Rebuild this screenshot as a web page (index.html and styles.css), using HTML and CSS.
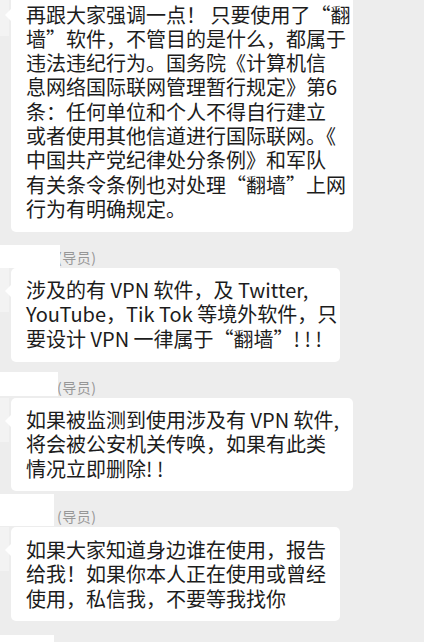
FILE: index.html
```html
<!DOCTYPE html>
<html lang="zh-CN">
<head>
<meta charset="utf-8">
<link rel="stylesheet" href="styles.css">
</head>
<body>
<div class="chat">
  <div class="msg first">
    <div class="body">
      <div class="avatar"></div>
      <div class="bubble wide">再跟大家强调一点！ 只要使用了“翻<br>墙”软件，不管目的是什么，都属于<br>违法违纪行为。国务院《计算机信<br>息网络国际联网管理暂行规定》第6<br>条：任何单位和个人不得自行建立<br>或者使用其他信道进行国际联网。《<br>中国共产党纪律处分条例》和军队<br>有关条令条例也对处理“翻墙”上网<br>行为有明确规定。</div>
    </div>
  </div>

  <div class="msg">
    <div class="name-row">
      <span class="redact r1"></span>
      <span class="name">(导员)</span>
    </div>
    <div class="body">
      <div class="avatar"></div>
      <div class="bubble narrow">涉及的有 VPN 软件，及 Twitter,<br>YouTube，Tik Tok 等境外软件，只<br>要设计 VPN 一律属于“翻墙”! ! !</div>
    </div>
  </div>

  <div class="msg">
    <div class="name-row">
      <span class="redact r2"></span>
      <span class="name">(导员)</span>
    </div>
    <div class="body">
      <div class="avatar"></div>
      <div class="bubble wide">如果被监测到使用涉及有 VPN 软件,<br>将会被公安机关传唤，如果有此类<br>情况立即删除! !</div>
    </div>
  </div>

  <div class="msg">
    <div class="name-row">
      <span class="redact r3"></span>
      <span class="name">(导员)</span>
    </div>
    <div class="body">
      <div class="avatar"></div>
      <div class="bubble narrow">如果大家知道身边谁在使用，报告<br>给我！如果你本人正在使用或曾经<br>使用，私信我，不要等我找你</div>
    </div>
  </div>

  <div class="msg">
    <div class="name-row">
      <span class="redact r4"></span>
    </div>
  </div>
</div>
</body>
</html>
```
FILE: styles.css
```css
html, body {
  margin: 0;
  padding: 0;
  background: #ededed;
  overflow: hidden;
}

.chat {
  width: 424px;
  height: 642px;
  overflow: hidden;
  font-family: "Noto Sans CJK SC", "Noto Sans", sans-serif;
}

.msg {
  padding-top: 15px;
}

.msg.first {
  padding-top: 0;
  margin-top: -8px;
}

.name-row {
  display: flex;
  align-items: flex-start;
  height: 20px;
  margin-bottom: 1px;
}

.redact {
  display: block;
  background: #ffffff;
  position: relative;
  z-index: 1;
  flex: none;
}

.r1 { width: 60px; height: 23px; margin-top: -2px; margin-right: -3px; }
.r2 { width: 58px; height: 24px; margin-top: -5px; margin-right: -1px; }
.r3 { width: 54px; height: 32px; margin-top: -12px; margin-right: 3px; }
.r4 { width: 54px; height: 30px; margin-top: -1px; }

.name {
  font-size: 14px;
  line-height: 20px;
  color: #979797;
  letter-spacing: 0.5px;
}

.body {
  display: flex;
  align-items: flex-start;
}

.avatar {
  flex: none;
  width: 9px;
  height: 44px;
  background: #f3f3f3;
  margin-right: 2px;
}

.bubble {
  position: relative;
  box-sizing: border-box;
  background: #ffffff;
  border-radius: 5px;
  padding: 10.5px 12px 10.5px 15px;
  font-size: 20px;
  line-height: 24.3px;
  color: #1c1c1c;
  white-space: nowrap;
}

.bubble.wide { width: 342px; }
.bubble.narrow { width: 329px; }

.bubble::before {
  content: "";
  position: absolute;
  left: -6px;
  top: 17px;
  border-style: solid;
  border-width: 6px 6px 6px 0;
  border-color: transparent #ffffff transparent transparent;
}
```
